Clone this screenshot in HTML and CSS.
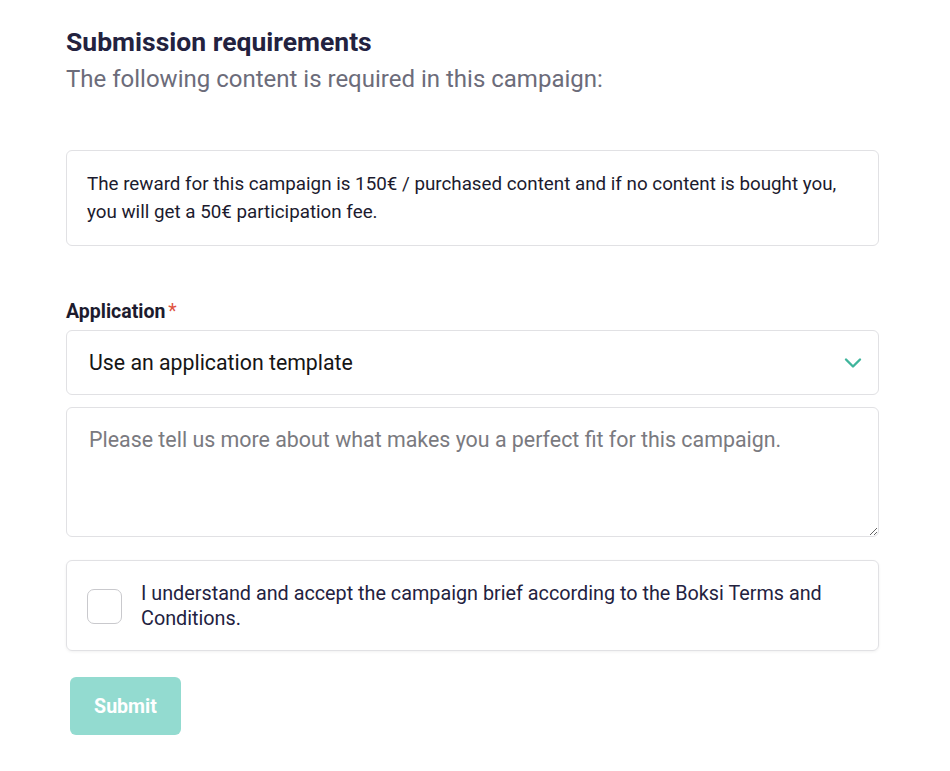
FILE: index.html
```html
<!DOCTYPE html>
<html lang="en">
<head>
<meta charset="utf-8">
<title>Submission requirements</title>
<link rel="stylesheet" href="styles.css">
</head>
<body>
<main class="page">
  <header class="head">
    <h1 class="title">Submission requirements</h1>
    <p class="subtitle">The following content is required in this campaign:</p>
  </header>

  <div class="info-card">
    The reward for this campaign is 150€ / purchased content and if no content is bought you, you will get a 50€ participation fee.
  </div>

  <form class="form">
    <label class="label" for="tpl">Application<span class="req">*</span></label>
    <div class="select">
      <span class="select-text">Use an application template</span>
      <svg class="chev" width="18" height="12" viewBox="0 0 18 12" aria-hidden="true"><path d="M2 2.5 L9 9.5 L16 2.5" fill="none" stroke="#3fb59c" stroke-width="2.4" stroke-linecap="round" stroke-linejoin="round"/></svg>
    </div>
    <textarea class="textarea" placeholder="Please tell us more about what makes you a perfect fit for this campaign."></textarea>

    <div class="check-card">
      <span class="checkbox"></span>
      <span class="check-text">I understand and accept the campaign brief according to the Boksi Terms and Conditions.</span>
    </div>

    <button type="button" class="submit">Submit</button>
  </form>
</main>
</body>
</html>
```

FILE: styles.css
```css
* { box-sizing: border-box; }
html, body { margin: 0; padding: 0; background: #fff; }
body { font-family: Roboto, "Liberation Sans", sans-serif; color: #1f1e36; }

.page {
  width: 813px;
  margin-left: 66px;
  padding-top: 25px;
}

.title {
  margin: 0;
  font-size: 26.5px;
  line-height: 34px;
  font-weight: 700;
  color: #23223f;
}
.subtitle {
  margin: 5px 0 0;
  font-size: 24px;
  line-height: 30px;
  color: #6c6c7a;
}

.info-card {
  margin-top: 56px;
  border: 1px solid #e1e1e4;
  border-radius: 6px;
  padding: 19px 20px 0;
  font-size: 18.8px;
  line-height: 28px;
  color: #1c1b2e;
  height: 96px;
}

.form { display: flex; flex-direction: column; margin-top: 54px; }

.label {
  font-size: 19.5px;
  font-weight: 700;
  line-height: 24px;
  color: #1c1b2e;
}
.req { color: #e0533f; margin-left: 3px; font-weight: 400; }

.select {
  margin-top: 6px;
  height: 65px;
  border: 1px solid #e1e1e4;
  border-radius: 6px;
  display: flex;
  align-items: center;
  justify-content: space-between;
  padding: 0 16px 0 22px;
}
.select-text { font-size: 21.3px; color: #151515; }
.chev { display: block; }

.textarea {
  margin-top: 12px;
  height: 130px;
  border: 1px solid #e1e1e4;
  border-radius: 6px;
  padding: 19px 22px;
  font-family: inherit;
  font-size: 21.4px;
  line-height: 26px;
  resize: vertical;
  color: #222;
}
.textarea::placeholder { color: #7a7a80; }

.check-card {
  margin-top: 23px;
  height: 91px;
  border: 1px solid #e1e1e4;
  border-radius: 6px;
  box-shadow: 0 1px 3px rgba(0,0,0,0.06);
  display: flex;
  align-items: flex-start;
  padding: 20px 20px 0 20px;
  gap: 19px;
}
.checkbox {
  flex: none;
  width: 35px;
  height: 35px;
  margin-top: 8px;
  border: 1.5px solid #c9c9cd;
  border-radius: 7px;
  background: #fff;
}
.check-text {
  font-size: 19.8px;
  line-height: 25px;
  color: #23223f;
}

.submit {
  align-self: flex-start;
  margin-top: 26px;
  margin-left: 4px;
  width: 111px;
  height: 58px;
  border: none;
  border-radius: 6px;
  background: #93dbd0;
  color: #fff;
  font-family: inherit;
  font-size: 19.6px;
  font-weight: 700;
}
```
